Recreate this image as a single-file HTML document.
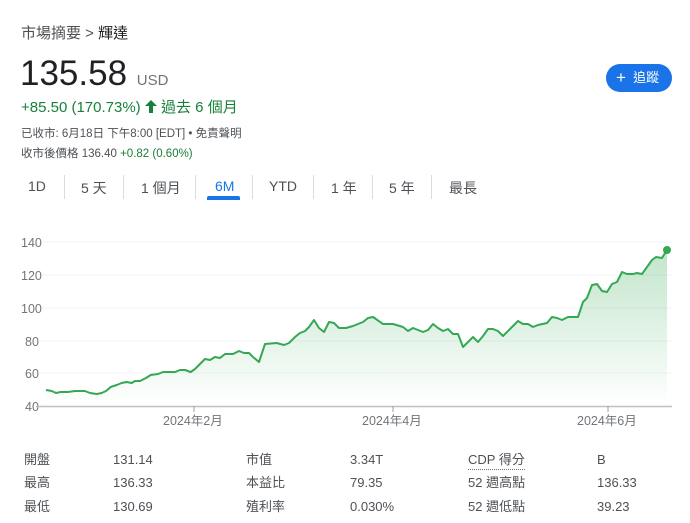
<!DOCTYPE html>
<html><head><meta charset="utf-8"><style>
*{margin:0;padding:0;box-sizing:border-box}
body{width:690px;height:523px;background:#fff;font-family:"Liberation Sans","Noto Sans CJK TC",sans-serif;color:#202124;position:relative;overflow:hidden}
.a{position:absolute;white-space:nowrap}
.g{color:#4d5156}
.tab{position:absolute;top:178px;font-size:14px;color:#4d5156}
.sep{position:absolute;top:175px;width:1px;height:24px;background:#dadce0}
.s{position:absolute;font-size:13px;color:#4d5156;line-height:16px;height:16px}
</style></head><body>
<div class="a g" style="left:21px;top:22px;font-size:15px">市場摘要 &gt; <span style="color:#202124">輝達</span></div>
<div class="a" style="left:20px;top:54px;font-size:35px;color:#202124">135.58 <span style="font-size:15px;color:#70757a">USD</span></div>
<div class="a" style="left:21px;top:96px;font-size:15px;color:#188038">+85.50 (170.73%) <svg width="12" height="13" viewBox="0 0 12 13" style="vertical-align:-1px"><path d="M6 0 L12 6 H8 V13 H4 V6 H0 Z" fill="#188038"/></svg> 過去 6 個月</div>
<div class="a g" style="left:21px;top:125px;font-size:11.5px">已收市: 6月18日 下午8:00 [EDT] • 免責聲明</div>
<div class="a g" style="left:21px;top:145px;font-size:11.5px">收市後價格 136.40 <span style="color:#188038">+0.82 (0.60%)</span></div>
<div class="a" style="left:606px;top:64px;width:66px;height:28px;border-radius:14px;background:#1a73e8;color:#fff;font-size:13px;line-height:28px;padding-left:10px"><span style="font-size:17px;vertical-align:-1px">+</span>&nbsp; 追蹤</div>
<div class="tab" style="left:28px">1D</div><div class="sep" style="left:64px"></div>
<div class="tab" style="left:81px">5 天</div><div class="sep" style="left:123px"></div>
<div class="tab" style="left:141px">1 個月</div><div class="sep" style="left:195px"></div>
<div class="tab" style="left:215px;color:#1a73e8">6M</div>
<div class="a" style="left:207px;top:196px;width:33px;height:4px;border-radius:2px 2px 0 0;background:#1a73e8"></div>
<div class="sep" style="left:252px"></div>
<div class="tab" style="left:269px">YTD</div><div class="sep" style="left:313px"></div>
<div class="tab" style="left:331px">1 年</div><div class="sep" style="left:372px"></div>
<div class="tab" style="left:389px">5 年</div><div class="sep" style="left:431px"></div>
<div class="tab" style="left:449px">最長</div>
<svg class="a" style="left:0;top:0" width="690" height="440">
<defs><linearGradient id="gr" x1="0" y1="0" x2="0" y2="1"><stop offset="0" stop-color="#34a853" stop-opacity="0.3"/><stop offset="1" stop-color="#34a853" stop-opacity="0"/></linearGradient></defs>
<g stroke="#f1f3f4" stroke-width="1">
<line x1="40" y1="242" x2="672" y2="242"/><line x1="40" y1="275" x2="672" y2="275"/><line x1="40" y1="308" x2="672" y2="308"/><line x1="40" y1="341" x2="672" y2="341"/><line x1="40" y1="373" x2="672" y2="373"/></g>
<g font-size="12.5" fill="#70757a" font-family="Liberation Sans,sans-serif">
<text x="21" y="247">140</text><text x="21" y="280">120</text><text x="21" y="313">100</text><text x="25" y="346">80</text><text x="25" y="378">60</text><text x="25" y="411">40</text></g>
<polygon fill="url(#gr)" points="46,390 51.7,391 56,393 60.7,392 68,392 75,391 85,391 90,393 96.7,394 101.7,393 106,391 110.7,387 116.7,385 121.7,383 126.7,382 131.7,383 135,381 140,381 146,378 150.7,375 158,374 163,372 170,372 175,372 180,370 185,370 190.7,372 195,369 200,364 205,359 210,360 215,357 220,358 225,354 233,354 239,351 244,353 249,353 253,357 259,362 265,344 276.7,343 284,345 289,343 295,337 300,333 305,331 309,327 314,320 319,328 324,332 329,322 334,323 339,328 346,328 353,326 363,322 368,318 373,317 383,324 393,324 403,327 408,331 413,328 418,330 423,332 428,330 433,324 438,328 443,331 448,329 453,334 458,334 463,347 473,337 478,342 483,336 488,329 493,329 498,331 503,336 510,329 518,321 523,324 528,324 533,327 538,325 547,323 552,317 557,318 562,320 568,317 578,317 583,302 587,298 592,285 597,284 602,291 607,292 612,284 617,282 622,272 627,274 633,274 637,273 642,274 647,267 652,260 656,257 662,258 667,250 667,406 46,406"/>
<polyline fill="none" stroke="#34a853" stroke-width="2" stroke-linejoin="round" points="46,390 51.7,391 56,393 60.7,392 68,392 75,391 85,391 90,393 96.7,394 101.7,393 106,391 110.7,387 116.7,385 121.7,383 126.7,382 131.7,383 135,381 140,381 146,378 150.7,375 158,374 163,372 170,372 175,372 180,370 185,370 190.7,372 195,369 200,364 205,359 210,360 215,357 220,358 225,354 233,354 239,351 244,353 249,353 253,357 259,362 265,344 276.7,343 284,345 289,343 295,337 300,333 305,331 309,327 314,320 319,328 324,332 329,322 334,323 339,328 346,328 353,326 363,322 368,318 373,317 383,324 393,324 403,327 408,331 413,328 418,330 423,332 428,330 433,324 438,328 443,331 448,329 453,334 458,334 463,347 473,337 478,342 483,336 488,329 493,329 498,331 503,336 510,329 518,321 523,324 528,324 533,327 538,325 547,323 552,317 557,318 562,320 568,317 578,317 583,302 587,298 592,285 597,284 602,291 607,292 612,284 617,282 622,272 627,274 633,274 637,273 642,274 647,267 652,260 656,257 662,258 667,250"/>
<circle cx="667" cy="250" r="4" fill="#34a853"/>
<line x1="36" y1="406.5" x2="672" y2="406.5" stroke="#bdc1c6" stroke-width="1.5"/>
<g stroke="#9aa0a6"><line x1="194" y1="406" x2="194" y2="412"/><line x1="393" y1="406" x2="393" y2="412"/><line x1="608" y1="406" x2="608" y2="412"/></g>
<g font-size="12.5" fill="#70757a" font-family="Liberation Sans,Noto Sans CJK TC,sans-serif">
<text x="163" y="425">2024年2月</text><text x="362" y="425">2024年4月</text><text x="577" y="425">2024年6月</text></g>
</svg>
<div class="s" style="left:24px;top:452px">開盤</div><div class="s" style="left:113px;top:452px">131.14</div>
<div class="s" style="left:246px;top:452px">市值</div><div class="s" style="left:350px;top:452px">3.34T</div>
<div class="s" style="left:468px;top:452px;border-bottom:1px dotted #70757a;height:18px">CDP 得分</div><div class="s" style="left:597px;top:452px">B</div>
<div class="s" style="left:24px;top:475px">最高</div><div class="s" style="left:113px;top:475px">136.33</div>
<div class="s" style="left:246px;top:475px">本益比</div><div class="s" style="left:350px;top:475px">79.35</div>
<div class="s" style="left:468px;top:475px">52 週高點</div><div class="s" style="left:597px;top:475px">136.33</div>
<div class="s" style="left:24px;top:499px">最低</div><div class="s" style="left:113px;top:499px">130.69</div>
<div class="s" style="left:246px;top:499px">殖利率</div><div class="s" style="left:350px;top:499px">0.030%</div>
<div class="s" style="left:468px;top:499px">52 週低點</div><div class="s" style="left:597px;top:499px">39.23</div>
</body></html>
